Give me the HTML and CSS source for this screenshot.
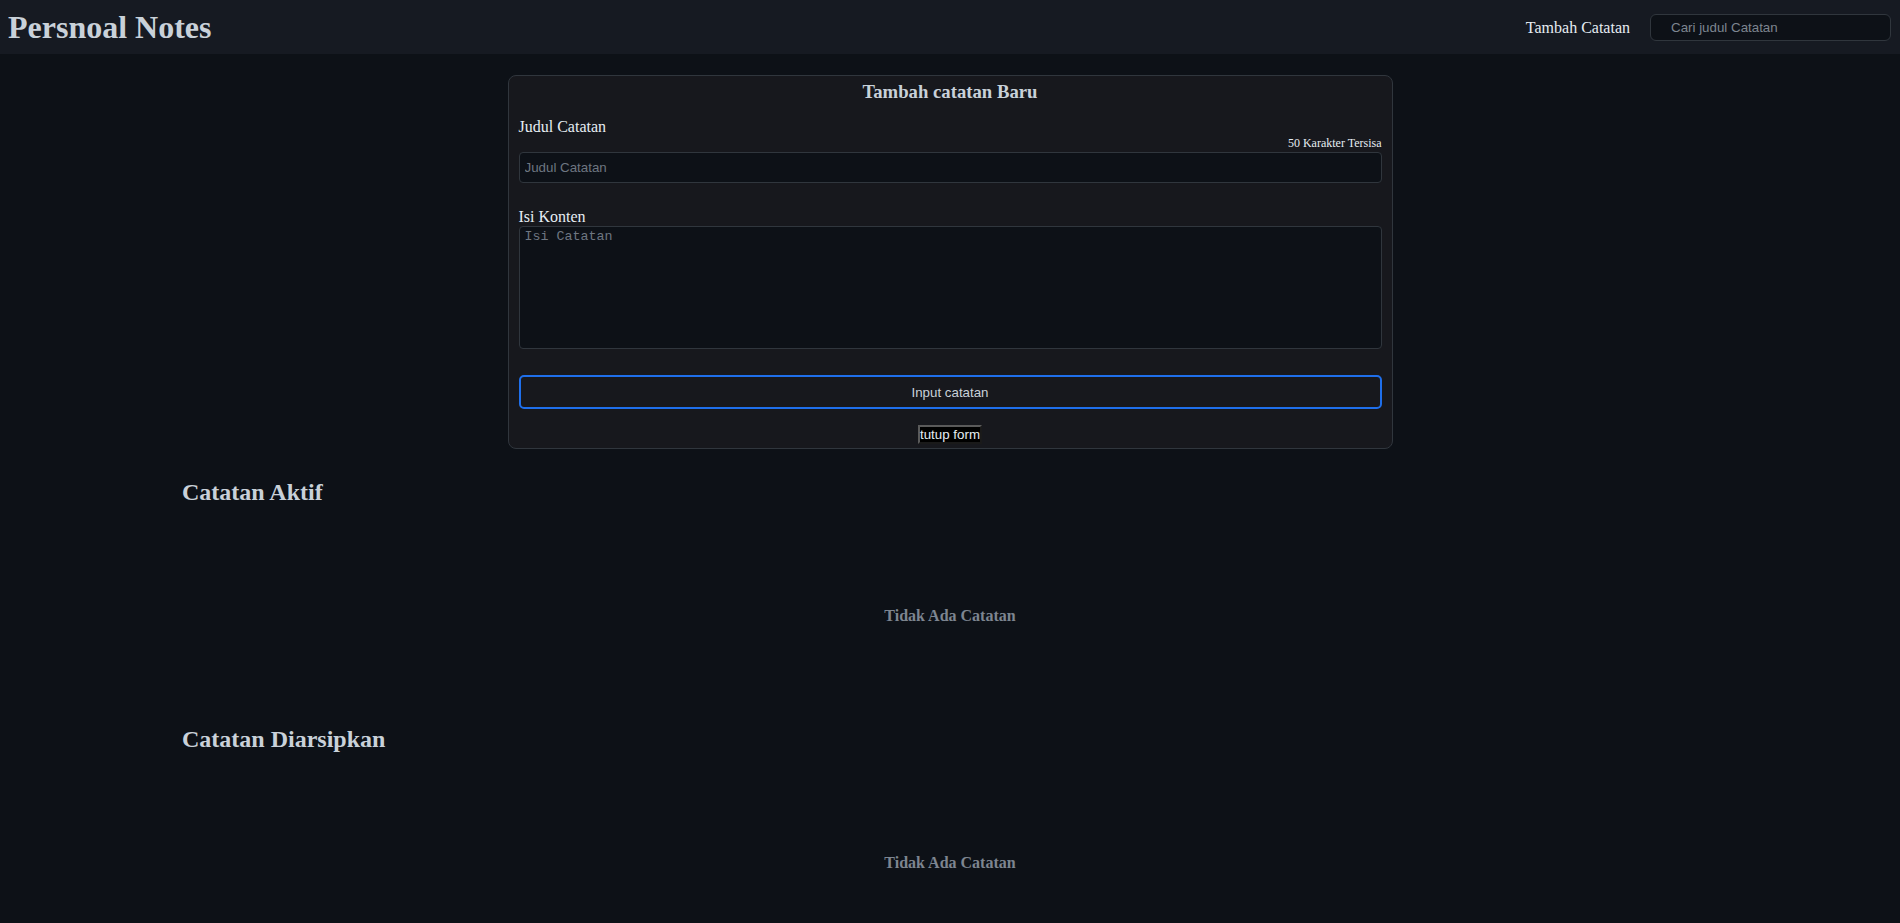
FILE: index.html
```html
<!DOCTYPE html>
<html lang="id">
<head>
<meta charset="utf-8">
<title>Persnoal Notes</title>
<link rel="stylesheet" href="styles.css">
</head>
<body>
<header class="topbar">
  <h1 class="brand">Persnoal Notes</h1>
  <nav class="nav">
    <span class="nav-link">Tambah Catatan</span>
    <input class="search" type="text" placeholder="Cari judul Catatan">
  </nav>
</header>
<main>
  <form class="note-form">
    <h3 class="form-title">Tambah catatan Baru</h3>
    <label class="field-label">Judul Catatan</label>
    <div class="counter">50 Karakter Tersisa</div>
    <input class="title-input" type="text" placeholder="Judul Catatan">
    <label class="field-label content-label">Isi Konten</label>
    <textarea class="body-input" placeholder="Isi Catatan"></textarea>
    <button class="submit" type="button">Input catatan</button>
    <div class="close-row"><button class="close" type="button">tutup form</button></div>
  </form>
  <section class="notes">
    <h2 class="notes-title">Catatan Aktif</h2>
    <p class="empty">Tidak Ada Catatan</p>
    <h2 class="notes-title">Catatan Diarsipkan</h2>
    <p class="empty">Tidak Ada Catatan</p>
  </section>
</main>
</body>
</html>
```
FILE: styles.css
```css
html, body {
  margin: 0;
  padding: 0;
  background: #0d1117;
  color: #c9d1d9;
  font-family: "Liberation Serif", "Times New Roman", serif;
}
.topbar {
  height: 54px;
  background: #161a22;
  display: flex;
  align-items: center;
  justify-content: space-between;
  padding: 0 9px 0 8px;
  box-sizing: border-box;
}
.brand {
  margin: 0;
  font-size: 32px;
  font-weight: bold;
  color: #c9d1d9;
  padding-top: 1px;
}
.nav {
  display: flex;
  align-items: center;
  gap: 20px;
}
.nav-link {
  font-size: 16px;
  color: #e6edf3;
  padding-top: 1px;
}
.search {
  width: 241px;
  height: 27px;
  box-sizing: border-box;
  background: #0d1117;
  border: 1px solid #30363d;
  border-radius: 6px;
  padding: 0 0 0 20px;
  font-family: "Liberation Sans", Arial, sans-serif;
  font-size: 13.33px;
  color: #c9d1d9;
  outline: none;
}
.search::placeholder { color: #7d8590; }
.note-form {
  width: 885px;
  box-sizing: border-box;
  margin: 21px auto 0;
  background: #17181d;
  border: 1px solid #30363d;
  border-radius: 8px;
  padding: 5px 10px 4px;
  display: flex;
  flex-direction: column;
}
.form-title {
  margin: 0;
  text-align: center;
  font-size: 18.72px;
  font-weight: bold;
  color: #c9d1d9;
}
.field-label {
  margin-top: 15px;
  font-size: 16px;
  color: #e6edf3;
}
.content-label { margin-top: 25px; }
.counter {
  text-align: right;
  font-size: 12px;
  color: #e6edf3;
}
.title-input {
  margin-top: 1px;
  height: 31px;
  box-sizing: border-box;
  background: #0d1117;
  border: 1px solid #30363d;
  border-radius: 4px;
  padding: 0 5px;
  font-family: "Liberation Sans", Arial, sans-serif;
  font-size: 13.33px;
  color: #c9d1d9;
  outline: none;
}
.title-input::placeholder { color: #6e7681; }
.body-input {
  height: 123px;
  box-sizing: border-box;
  background: #0d1117;
  border: 1px solid #30363d;
  border-radius: 4px;
  padding: 2px 5px;
  font-family: "Liberation Mono", "Courier New", monospace;
  font-size: 13.33px;
  color: #c9d1d9;
  resize: none;
  outline: none;
}
.body-input::placeholder { color: #6e7681; }
.submit {
  margin-top: 26px;
  height: 34px;
  background: transparent;
  border: 2px solid #1f6feb;
  border-radius: 5px;
  font-family: "Liberation Sans", Arial, sans-serif;
  font-size: 13.33px;
  color: #c9d1d9;
}
.close-row {
  margin-top: 16px;
  display: flex;
  justify-content: center;
}
.close {
  background: #000;
  color: #e6edf3;
  border: 2px solid #5a5a5a;
  border-color: #5a5a5a #1a1a1a #1a1a1a #5a5a5a;
  padding: 0;
  font-family: "Liberation Sans", Arial, sans-serif;
  font-size: 13.33px;
  line-height: 15px;
}
.notes {
  width: 1536px;
  margin: 30px auto 0;
}
.notes-title {
  margin: 0;
  font-size: 24px;
  font-weight: bold;
  color: #c9d1d9;
}
.empty {
  margin: 0;
  padding: 101px 0 101px;
  text-align: center;
  font-size: 16px;
  font-weight: bold;
  color: #7d8590;
}
```
